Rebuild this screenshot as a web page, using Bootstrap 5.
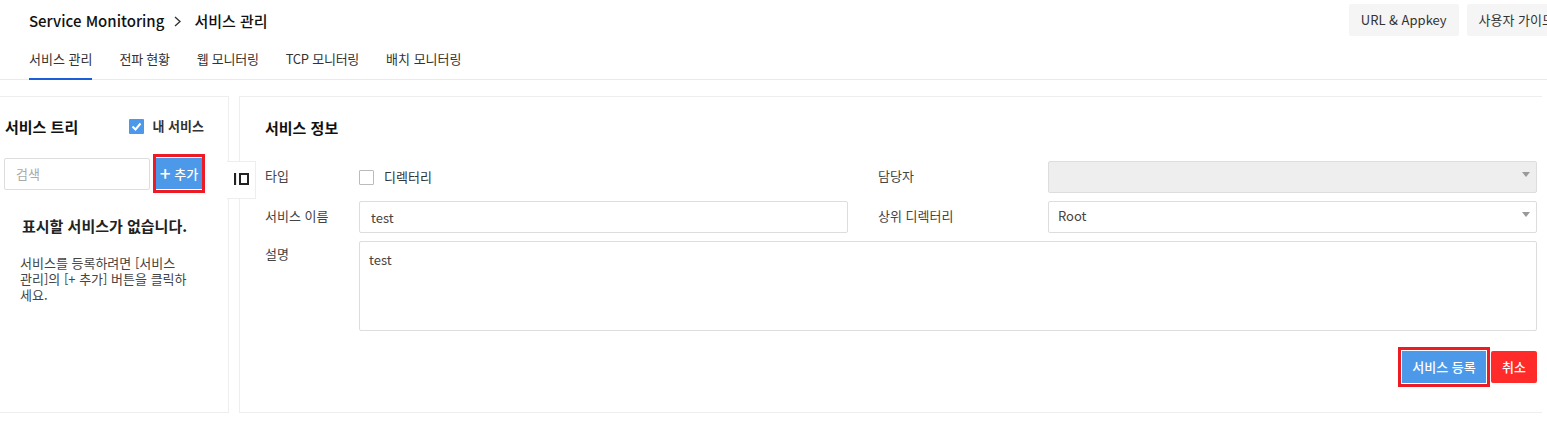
<!DOCTYPE html>
<html lang="ko">
<head>
    <meta charset="UTF-8">
    <title>Service Monitoring</title>
    <link rel="stylesheet" href="https://cdn.jsdelivr.net/npm/bootstrap@5.3.0/dist/css/bootstrap.min.css">
    <style>
        html, body { height: 427px; overflow: hidden; }
        body {
            font-family: "Noto Sans CJK KR", "Noto Sans", sans-serif;
            font-size: 13px;
            color: #333;
            background: #fff;
        }
        .top-bar { height: 44px; padding: 4px 0 0 29px; }
        .crumb { font-size: 15px; font-weight: 500; color: #111; line-height: 34px; height: 34px; }
        .crumb-sep { width: 7px; height: 11px; margin: 0 13px 0 10px; }
        .top-btns { gap: 8px; margin-right: -19px; }
        .top-btn {
            height: 32px; padding: 0 12px; font-size: 13px; color: #333;
            background: #f5f5f5; border: 0; border-radius: 2px; white-space: nowrap;
        }
        .tab-strip { height: 36px; padding-left: 29px; gap: 27px; border-bottom: 1px solid #eaeaea; }
        .tab-item { height: 36px; line-height: 30px; font-size: 13px; color: #333; text-decoration: none; }
        .tab-item.tight { letter-spacing: -0.25px; }
        .tab-item.on { border-bottom: 2px solid #1a5fd8; }
        .work-area { padding-top: 16px; gap: 10px; position: relative; padding-right: 5px; }
        .tree-panel {
            width: 229px; height: 317px; flex: none; padding: 0 0 0 4px;
            border: 1px solid #eee; border-left: 0;
        }
        .info-panel {
            flex: 1; height: 317px; padding: 0 5px 0 25px;
            border: 1px solid #eee; border-right: 0;
        }
        .panel-title { font-size: 15px; font-weight: 700; color: #111; margin: 0; }
        .tree-head { height: 60px; padding: 0 24px 0 1px; }
        .my-check {
            width: 15px; height: 15px; background: #4c98e9; border-radius: 1px;
            margin-right: 9px; margin-top: -2px;
        }
        .my-label { font-size: 13px; font-weight: 700; color: #333; margin-top: -2px; }
        .search-row { gap: 6px; height: 34px; }
        .search-box.form-control {
            width: 146px; height: 32px; margin-top: 1px; font-size: 13px; padding: 0 11px 2px;
            border: 1px solid #ddd; border-radius: 2px; color: #333;
        }
        .search-box::placeholder { color: #aaa; }
        .blue-btn {
            background: #4c98e9; color: #fff; border: 0; border-radius: 0;
            font-size: 13px; font-weight: 500; padding: 0;
        }
        .blue-btn:hover { background: #4c98e9; color: #fff; }
        .add-btn { width: 46px; height: 33px; box-shadow: inset 0 1px #fff, inset 0 -1px #fff; outline: 3px solid #ed1c24; }
        .plus-sign { font-size: 19px; line-height: 1; vertical-align: -2px; }
        .save-btn { width: 84px; height: 32px; outline: 3px solid #ed1c24; outline-offset: 1px; }
        .empty-note { padding: 25px 0 0 16px; }
        .empty-title { font-size: 15px; font-weight: 700; color: #222; margin: 0 0 19px 2px; line-height: 20px; }
        .empty-text { width: 167px; font-size: 13px; line-height: 16px; color: #444; margin: 0; }
        .toggle-tab {
            position: absolute; left: 227px; top: 81px; width: 29px; height: 38px; padding-bottom: 2px;
            background: #fff; border: 1px solid #eee; border-left: 0;
        }
        .info-head { height: 64px; padding-bottom: 3px; }
        .form-line { margin-bottom: 8px; }
        .field-label { width: 94px; flex: none; font-size: 13px; color: #444; line-height: 30px; }
        .field-label.wide { width: 170px; margin-left: 30px; }
        .field-label.up { line-height: 26px; }
        .half-field { width: 489px; flex: none; }
        .field-box.form-control, .field-box.form-select {
            height: 32px; font-size: 13px; color: #444; padding: 0 0 0 9px;
            border: 1px solid #ddd; border-radius: 2px; box-shadow: none;
        }
        .field-box.form-select {
            padding-bottom: 2px;
            background-image: url("data:image/svg+xml,%3csvg xmlns='http://www.w3.org/2000/svg' viewBox='0 0 8 5'%3e%3cpath fill='%23999' d='M0 0h8L4 5z'/%3e%3c/svg%3e");
            background-size: 8px 5px; background-position: right 6px top 10px;
        }
        .field-box.form-select:disabled { background-color: #eee; }
        .name-box.form-control { padding-left: 11px; }
        .note-box.form-control { width: 1178px; height: 90px; padding: 8px 9px; resize: none; }
        .type-field { width: 489px; flex: none; height: 32px; }
        .plain-check { width: 15px; height: 15px; border: 1px solid #bbb; border-radius: 1px; margin-right: 10px; }
        .action-row { gap: 5px; padding-top: 20px; width: 1272px; }
        .cancel-btn {
            width: 46px; height: 32px; background: #ff2a2a; color: #fff; border: 0;
            border-radius: 2px; font-size: 13px; font-weight: 500; padding: 0;
        }
        .cancel-btn:hover { background: #ff2a2a; color: #fff; }
    </style>
</head>
<body>
    <div class="top-bar d-flex justify-content-between">
        <div class="crumb d-flex align-items-center">
            <span>Service Monitoring</span>
            <svg class="crumb-sep" viewBox="0 0 7 11"><path d="M1 1l5 4.5L1 10" fill="none" stroke="#333" stroke-width="1.4"/></svg>
            <span>서비스 관리</span>
        </div>
        <div class="top-btns d-flex">
            <button class="top-btn" type="button">URL &amp; Appkey</button>
            <button class="top-btn" type="button">사용자 가이드</button>
        </div>
    </div>

    <div class="tab-strip d-flex">
        <a class="tab-item on" href="#">서비스 관리</a>
        <a class="tab-item tight" href="#">전파 현황</a>
        <a class="tab-item tight" href="#">웹 모니터링</a>
        <a class="tab-item tight" href="#">TCP 모니터링</a>
        <a class="tab-item" href="#">배치 모니터링</a>
    </div>

    <div class="work-area d-flex">
        <div class="tree-panel">
            <div class="tree-head d-flex align-items-center justify-content-between">
                <h2 class="panel-title">서비스 트리</h2>
                <div class="d-flex align-items-center">
                    <svg class="my-check" viewBox="0 0 15 15"><path d="M3.5 7.5l3 3 5-6" fill="none" stroke="#fff" stroke-width="2"/></svg>
                    <span class="my-label">내 서비스</span>
                </div>
            </div>
            <div class="search-row d-flex">
                <input class="search-box form-control" type="text" placeholder="검색">
                <button class="btn blue-btn add-btn" type="button"><span class="plus-sign">+</span> 추가</button>
            </div>
            <div class="empty-note">
                <p class="empty-title">표시할 서비스가 없습니다.</p>
                <p class="empty-text">서비스를 등록하려면 [서비스 관리]의 [+ 추가] 버튼을 클릭하세요.</p>
            </div>
        </div>

        <div class="toggle-tab d-flex align-items-center justify-content-center">
            <svg width="15" height="12" viewBox="0 0 15 12"><path d="M1 0v12" stroke="#222" stroke-width="2.2"/><rect x="6" y="1" width="8" height="10" fill="none" stroke="#222" stroke-width="2"/></svg>
        </div>

        <div class="info-panel">
            <div class="info-head d-flex align-items-center">
                <h2 class="panel-title">서비스 정보</h2>
            </div>
            <div class="form-line d-flex">
                <div class="field-label">타입</div>
                <div class="type-field d-flex align-items-center">
                    <span class="plain-check"></span>
                    <span>디렉터리</span>
                </div>
                <div class="field-label wide">담당자</div>
                <select class="field-box form-select" disabled><option></option></select>
            </div>
            <div class="form-line d-flex">
                <div class="field-label">서비스 이름</div>
                <div class="half-field"><input class="field-box name-box form-control" type="text" value="test"></div>
                <div class="field-label wide">상위 디렉터리</div>
                <select class="field-box form-select"><option>Root</option></select>
            </div>
            <div class="d-flex">
                <div class="field-label up">설명</div>
                <textarea class="field-box note-box form-control">test</textarea>
            </div>
            <div class="action-row d-flex justify-content-end">
                <button class="btn blue-btn save-btn" type="button">서비스 등록</button>
                <button class="btn cancel-btn" type="button">취소</button>
            </div>
        </div>
    </div>
    <script src="https://cdn.jsdelivr.net/npm/bootstrap@5.3.0/dist/js/bootstrap.bundle.min.js"></script>
</body>
</html>
